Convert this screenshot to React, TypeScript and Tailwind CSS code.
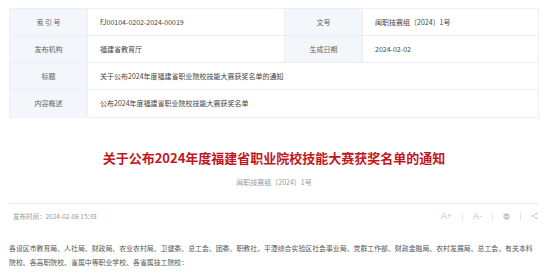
const font = "font-['Noto_Sans_CJK_SC','Noto_Sans',sans-serif]";

function Label({ children }: { children: React.ReactNode }) {
  return (
    <div className="flex items-center justify-center border-b border-r border-[#eceff3] bg-[#f3f6fa] text-[#666]">
      {children}
    </div>
  );
}

function Value({ children, wide }: { children?: React.ReactNode; wide?: boolean }) {
  return (
    <div className={`flex items-center border-b border-r border-[#eceff3] bg-white pl-[12px] text-[#444] ${wide ? 'col-span-3' : ''}`}>
      {children}
    </div>
  );
}

function Sep() {
  return <span className="h-[7px] w-px bg-[#e2e2e2]" />;
}

export default function App() {
  return (
    <div className={`min-h-[274px] w-[553px] bg-white ${font}`}>
      <div className="ml-[9px] w-[530px] pt-[8px]">
        <div className="grid grid-cols-[78px_197px_78px_1fr] grid-rows-[27px_27px_27px_28px] border-l border-t border-[#eceff3] text-[7px]">
          <Label>索 引 号</Label>
          <Value>FJ00104-0202-2024-00019</Value>
          <Label>文号</Label>
          <Value>闽职技赛组〔2024〕1号</Value>
          <Label>发布机构</Label>
          <Value>福建省教育厅</Value>
          <Label>生成日期</Label>
          <Value>2024-02-02</Value>
          <Label>标题</Label>
          <Value wide>关于公布2024年度福建省职业院校技能大赛获奖名单的通知</Value>
          <Label>内容概述</Label>
          <Value wide>公布2024年度福建省职业院校技能大赛获奖名单</Value>
        </div>

        <h1 className="mt-[31px] text-center text-[13px] font-bold leading-[17px] text-[#c4161c]">
          关于公布2024年度福建省职业院校技能大赛获奖名单的通知
        </h1>
        <div className="mt-[12px] text-center text-[7px] leading-[9px] text-[#999]">闽职技赛组〔2024〕1号</div>

        <div className="mt-[16px] border-t border-[#ececec]" />

        <div className="flex items-center justify-between pt-[7px]">
          <span className="pl-[4px] text-[6.5px] leading-[9px] text-[#999]">发布时间：2024-02-06 15:38</span>
          <div className="flex items-center gap-[10px] pr-[1px] text-[9px] leading-[10px] text-[#c4c4c4]">
            <span className="font-['Liberation_Sans',sans-serif]">A+</span>
            <Sep />
            <span className="font-['Liberation_Sans',sans-serif]">A-</span>
            <Sep />
            <svg width="7" height="7" viewBox="0 0 10 10" className="text-[#c8c8c8]">
              <circle cx="5" cy="5" r="4.5" fill="currentColor" />
              <rect x="2" y="4.5" width="6" height="1" fill="#fff" />
            </svg>
            <Sep />
            <svg width="7" height="8" viewBox="0 0 10 11" fill="none" stroke="currentColor" strokeWidth="1.1">
              <circle cx="8" cy="2" r="1.1" />
              <circle cx="2" cy="5.5" r="1.1" />
              <circle cx="8" cy="9" r="1.1" />
              <path d="M7 2.6L3 5M3 6l4 2.4" />
            </svg>
          </div>
        </div>

        <p className="mt-[20px] text-[6.9px] leading-[14px] text-[#555]">
          各设区市教育局、人社局、财政局、农业农村局、卫健委、总工会、团委、职教社，平潭综合实验区社会事业局、党群工作部、财政金融局、农村发展局、总工会，有关本科院校、各高职院校、省属中等职业学校、各省属技工院校：
        </p>
      </div>
    </div>
  );
}
